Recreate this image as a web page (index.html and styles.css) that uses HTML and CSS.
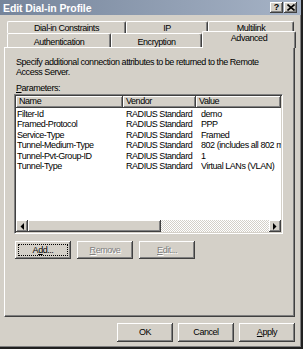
FILE: index.html
```html
<!DOCTYPE html>
<html>
<head>
<meta charset="utf-8">
<link rel="stylesheet" href="styles.css">
</head>
<body>
<div class="window">
  <div class="titlebar">
    <span class="title">Edit Dial-in Profile</span>
    <span class="tbtns">
      <span class="tbtn">?</span>
      <span class="tbtn close">
        <svg width="8" height="7" viewBox="0 0 8 7"><path d="M0.5 0.5 L7.5 6.5 M7.5 0.5 L0.5 6.5" stroke="#000" stroke-width="1.6"/></svg>
      </span>
    </span>
  </div>
  <div class="tabs">
    <div class="tabrow back">
      <div class="tab w1">Dial-in Constraints</div>
      <div class="tab w2">IP</div>
      <div class="tab w3">Multilink</div>
    </div>
    <div class="tabrow front">
      <div class="tab w4">Authentication</div>
      <div class="tab w5">Encryption</div>
      <div class="tab sel">Advanced</div>
    </div>
  </div>
  <div class="panel">
    <p class="desc">Specify additional connection attributes to be returned to the Remote<br>Access Server.</p>
    <p class="label"><u>P</u>arameters:</p>
    <div class="list">
      <div class="lhead">
        <div class="hcell c1">Name</div>
        <div class="hcell c2">Vendor</div>
        <div class="hcell c3">Value</div>
      </div>
      <div class="rows">
        <div class="row"><span class="c1">Filter-Id</span><span class="c2">RADIUS Standard</span><span class="c3">demo</span></div>
        <div class="row"><span class="c1">Framed-Protocol</span><span class="c2">RADIUS Standard</span><span class="c3">PPP</span></div>
        <div class="row"><span class="c1">Service-Type</span><span class="c2">RADIUS Standard</span><span class="c3">Framed</span></div>
        <div class="row"><span class="c1">Tunnel-Medium-Type</span><span class="c2">RADIUS Standard</span><span class="c3">802 (includes all 802 m</span></div>
        <div class="row"><span class="c1">Tunnel-Pvt-Group-ID</span><span class="c2">RADIUS Standard</span><span class="c3">1</span></div>
        <div class="row"><span class="c1">Tunnel-Type</span><span class="c2">RADIUS Standard</span><span class="c3">Virtual LANs (VLAN)</span></div>
      </div>
      <div class="hscroll">
        <span class="sbtn"><svg width="4" height="7" viewBox="0 0 4 7"><path d="M4 0 L0.5 3.5 L4 7 Z" fill="#000"/></svg></span>
        <span class="thumb"></span>
        <span class="track"></span>
        <span class="sbtn"><svg width="4" height="7" viewBox="0 0 4 7"><path d="M0 0 L3.5 3.5 L0 7 Z" fill="#000"/></svg></span>
      </div>
    </div>
    <div class="btnrow">
      <span class="btn focus"><span class="fr">A<u>d</u>d...</span></span>
      <span class="btn dis"><u>R</u>emove</span>
      <span class="btn dis"><u>E</u>dit...</span>
    </div>
  </div>
  <div class="footer">
    <span class="btn big">OK</span>
    <span class="btn big">Cancel</span>
    <span class="btn big"><u>A</u>pply</span>
  </div>
</div>
</body>
</html>
```

FILE: styles.css
```css
html, body {
  margin: 0;
  padding: 0;
  background: #d4d0c8;
}
body {
  font-family: "Liberation Sans", Arial, sans-serif;
  font-size: 9px;
  letter-spacing: -0.45px;
  color: #000;
}
.window {
  width: 303px;
  height: 349px;
  box-sizing: border-box;
  background: #d4d0c8;
  border-right: 2px solid #202020;
  border-bottom: 2px solid #202020;
  box-shadow: inset -1px -1px #808080;
  display: flex;
  flex-direction: column;
}
.titlebar {
  height: 15px;
  flex: none;
  display: flex;
  align-items: center;
  justify-content: space-between;
  background: linear-gradient(to right, #76859b, #a6b3c6);
  padding: 0 4px 0 3px;
}
.title {
  font-family: "Liberation Sans", Arial, sans-serif;
  font-weight: bold;
  font-size: 10.5px;
  color: #fff;
  letter-spacing: -0.1px;
}
.tbtns {
  display: flex;
  gap: 1px;
}
.tbtn {
  width: 13px;
  height: 11px;
  box-sizing: border-box;
  background: #d4d0c8;
  box-shadow: inset -1px -1px #404040, inset 1px 1px #fff, inset -2px -2px #808080;
  display: flex;
  align-items: center;
  justify-content: center;
  font-family: "Liberation Sans", Arial, sans-serif;
  font-weight: bold;
  font-size: 9px;
  letter-spacing: 0;
  line-height: 1;
}
.tabs {
  margin-top: 6px;
  padding-left: 7px;
  flex: none;
}
.tabrow {
  display: flex;
}
.tabrow.back {
  height: 12px;
}
.tabrow.front {
  height: 14px;
  align-items: flex-end;
}
.tab {
  box-sizing: border-box;
  height: 100%;
  border-top: 1px solid #fff;
  border-left: 1px solid #fff;
  border-right: 1px solid #404040;
  box-shadow: inset -1px 0 #808080;
  border-radius: 2px 2px 0 0;
  display: flex;
  justify-content: center;
  align-items: center;
  line-height: 1;
}
.back .tab { padding-top: 1px; }
.front .tab { padding-top: 3px; }
.w1 { width: 119px; }
.w2 { width: 82px; }
.w3 { width: 86px; }
.w4 { width: 104px; }
.w5 { width: 91px; }
.tab.sel {
  width: 94px;
  height: 17px;
  margin-bottom: -1px;
  margin-right: -2px;
  background: #d4d0c8;
  position: relative;
  z-index: 1;
  padding-top: 0;
  padding-bottom: 3px;
}
.panel {
  margin-left: 4px;
  width: 291px;
  height: 270px;
  flex: none;
  box-sizing: border-box;
  border-top: 1px solid #fff;
  border-left: 1px solid #fff;
  border-right: 1px solid #404040;
  border-bottom: 1px solid #404040;
  box-shadow: inset -1px -1px #808080;
  padding: 0 0 0 9px;
}
.desc {
  margin: 9px 0 0 2px;
  line-height: 10px;
  white-space: nowrap;
}
.label {
  margin: 6px 0 0 2px;
  line-height: 10px;
}
.list {
  margin-top: 1px;
  width: 269px;
  height: 140px;
  box-sizing: border-box;
  background: #fff;
  border-top: 1px solid #808080;
  border-left: 1px solid #808080;
  border-right: 1px solid #fff;
  border-bottom: 1px solid #fff;
  box-shadow: inset 1px 1px #404040, inset -1px -1px #d4d0c8;
  padding: 1px;
  display: flex;
  flex-direction: column;
  overflow: hidden;
}
.lhead {
  display: flex;
  height: 12px;
  flex: none;
}
.hcell {
  box-sizing: border-box;
  background: #d4d0c8;
  box-shadow: inset -1px -1px #404040, inset 1px 1px #fff, inset -2px -2px #808080;
  padding-left: 3px;
  line-height: 11px;
  white-space: nowrap;
  overflow: hidden;
}
.lhead .c1 { width: 107px; flex: none; }
.lhead .c2 { width: 73px; flex: none; }
.lhead .c3 { flex: 1; }
.rows {
  flex: 1;
  overflow: hidden;
  padding-top: 1px;
}
.row {
  display: flex;
  height: 10.4px;
  line-height: 10.4px;
  white-space: nowrap;
}
.row span { overflow: hidden; flex: none; }
.row .c1 { width: 107px; padding-left: 1px; box-sizing: border-box; }
.row .c2 { width: 78px; padding-left: 3px; box-sizing: border-box; }
.row .c3 { width: 80px; padding-left: 0px; box-sizing: border-box; }
.hscroll {
  height: 12px;
  flex: none;
  display: flex;
}
.sbtn {
  width: 12px;
  height: 12px;
  box-sizing: border-box;
  background: #d4d0c8;
  box-shadow: inset -1px -1px #404040, inset 1px 1px #fff, inset -2px -2px #808080;
  display: flex;
  align-items: center;
  justify-content: center;
  flex: none;
}
.thumb {
  width: 133px;
  height: 12px;
  flex: none;
  box-sizing: border-box;
  background: #d4d0c8;
  box-shadow: inset -1px -1px #404040, inset 1px 1px #fff, inset -2px -2px #808080;
}
.track {
  flex: 1;
  background-color: #fff;
  background-image:
    linear-gradient(45deg, #d4d0c8 25%, transparent 25%, transparent 75%, #d4d0c8 75%),
    linear-gradient(45deg, #d4d0c8 25%, transparent 25%, transparent 75%, #d4d0c8 75%);
  background-size: 2px 2px;
  background-position: 0 0, 1px 1px;
}
.btnrow {
  display: flex;
  gap: 6px;
  margin-top: 7px;
  margin-left: 1px;
}
.btn {
  width: 56px;
  height: 18px;
  box-sizing: border-box;
  background: #d4d0c8;
  box-shadow: inset -1px -1px #404040, inset 1px 1px #fff, inset -2px -2px #808080;
  display: flex;
  align-items: center;
  justify-content: center;
  line-height: 1;
}
.btn.focus {
  padding: 3px;
}
.fr {
  flex: 1;
  align-self: stretch;
  border: 1px dotted #000;
  display: flex;
  align-items: center;
  justify-content: center;
}
.btn.dis {
  color: #808080;
  text-shadow: 1px 1px #fff;
}
.footer {
  display: flex;
  justify-content: flex-end;
  gap: 5px;
  margin-top: 6px;
  padding-right: 6px;
}
.btn.big {
  height: 19px;
}
u { text-decoration: underline; text-underline-offset: 1px; }
```
